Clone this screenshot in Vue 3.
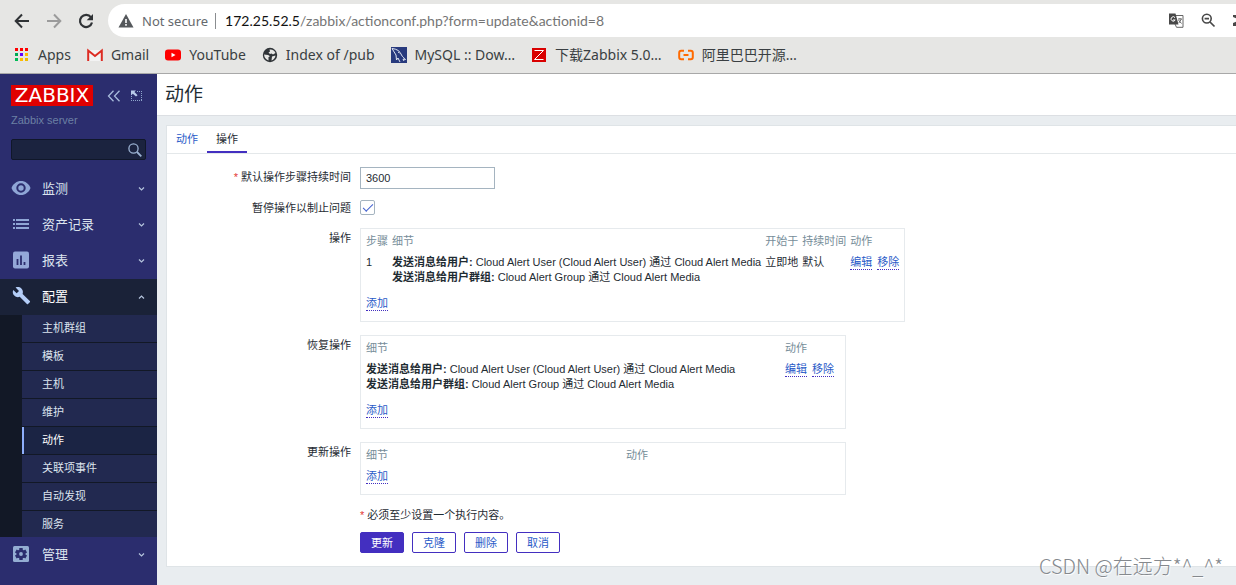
<script setup>
import { ref } from 'vue'

const bookmarks = [
  { id: 'apps', label: 'Apps' },
  { id: 'gmail', label: 'Gmail' },
  { id: 'youtube', label: 'YouTube' },
  { id: 'globe', label: 'Index of /pub' },
  { id: 'mysql', label: 'MySQL :: Dow…' },
  { id: 'zabbix', label: '下载Zabbix 5.0…' },
  { id: 'aliyun', label: '阿里巴巴开源…' },
]

const appColors = ['#f00', '#f00', '#f00', '#0a5', '#60f', '#fb0', '#0b5', '#fb0', '#eb0']

const menu = [
  { id: 'eye', label: '监测' },
  { id: 'list', label: '资产记录' },
  { id: 'chart', label: '报表' },
  {
    id: 'wrench',
    label: '配置',
    open: true,
    children: ['主机群组', '模板', '主机', '维护', '动作', '关联项事件', '自动发现', '服务'],
  },
  { id: 'gear', label: '管理' },
]

const messages = [
  { to: '发送消息给用户:', text: 'Cloud Alert User (Cloud Alert User) 通过 Cloud Alert Media' },
  { to: '发送消息给用户群组:', text: 'Cloud Alert Group 通过 Cloud Alert Media' },
]

const duration = ref('3600')
const pause = ref(true)
const search = ref('')
</script>

<template>
  <div class="window">
    <header class="browser">
      <div class="toolbar">
        <button class="tool" aria-label="Back">
          <svg width="16" height="16" viewBox="0 0 16 16"><path d="M15 8H2M8 1.5 1.7 8 8 14.5" fill="none" stroke="#303336" stroke-width="2" /></svg>
        </button>
        <button class="tool" aria-label="Forward">
          <svg width="16" height="16" viewBox="0 0 16 16"><path d="M1 8h13M8 1.5 14.3 8 8 14.5" fill="none" stroke="#9b9b9b" stroke-width="2" /></svg>
        </button>
        <button class="tool" aria-label="Reload">
          <svg width="16" height="16" viewBox="0 0 16 16"><path d="M13 4.3A6.1 6.1 0 1 0 14 9.5" fill="none" stroke="#303336" stroke-width="2.2" /><path d="M15 1v6.3H8.7z" fill="#303336" /></svg>
        </button>
        <div class="address">
          <svg width="16" height="14" viewBox="0 0 16 14"><path d="M8 0 15.5 13.5H.5z" fill="#55585c" /><path d="M7.2 5h1.6v4H7.2zM7.2 10h1.6v1.7H7.2z" fill="#fff" /></svg>
          <span class="secure">Not secure</span>
          <span class="url"><b>172.25.52.5</b>/zabbix/actionconf.php?form=update&amp;actionid=8</span>
          <div class="page-tools">
            <button class="tool" aria-label="Translate">
              <svg width="15" height="15" viewBox="0 0 15 15">
                <path d="M5 2.5h9v11.8H7.5L6 11" fill="none" stroke="#666" />
                <path d="M0 .5h6.5l3 11H0z" fill="#484848" />
                <path d="M6 4.6A2.2 2.2 0 1 0 6.2 7H4" fill="none" stroke="#fff" />
                <path d="M9 6h4M11 5v1M12.3 6.2 9.8 10M9.5 7l3 3.5" fill="none" stroke="#666" />
              </svg>
            </button>
            <button class="tool" aria-label="Zoom out">
              <svg width="15" height="15" viewBox="0 0 15 15"><circle cx="5.8" cy="5.6" r="4.4" fill="none" stroke="#484848" stroke-width="1.6" /><path d="M3.6 5.6H8M9 9l4.5 4.5" stroke="#484848" stroke-width="1.7" /></svg>
            </button>
            <button class="tool" aria-label="Extension">
              <svg width="15" height="15" viewBox="0 0 15 15"><path d="M0 2h5v4L0 4zM0 13v-3l5-2v5zM8 2h5v11H8z" fill="#484848" /></svg>
            </button>
          </div>
        </div>
      </div>
      <nav class="bookmarks">
        <a v-for="b in bookmarks" :key="b.id" href="#">
          <svg width="16" height="16" viewBox="0 0 16 16">
            <template v-if="b.id === 'apps'">
              <rect v-for="(c, i) in appColors" :key="i" :x="1 + (i % 3) * 5" :y="1 + Math.floor(i / 3) * 5" width="3" height="3" :fill="c" />
            </template>
            <template v-else-if="b.id === 'gmail'">
              <path d="M1 3h14v11H1z" fill="#f3f3f3" />
              <path d="M1.200 14V3.500L8 9l6.800-5.500V14" fill="none" stroke="#dd2c23" stroke-width="2" />
            </template>
            <template v-else-if="b.id === 'youtube'">
              <rect y="2.5" width="16" height="11" rx="3" fill="#f00" />
              <path d="M6.500 5.700v4.600l4-2.300z" fill="#fff" />
            </template>
            <template v-else-if="b.id === 'globe'">
              <circle cx="8" cy="8" r="7.2" fill="#303438" />
              <path d="M2 7.500 6 8q2 .3 1.500 2H6.500v3.500Q2.500 12 2 7.500zM7.500 2.500Q12 2 13.500 6L11 7.500 9.500 6.500 8 7 6.500 5.500 8 4.500zM10 9.500l3.500-1Q13 12 9.500 13.500z" fill="#e6e6e4" />
            </template>
            <template v-else-if="b.id === 'mysql'">
              <rect width="16" height="16" fill="#283a7d" />
              <path d="M1 1.500C6 2 9 4 10.500 8c.8 2 2.500 2.500 4 4.500L12 12l1 2M1 1.500 5 8l.5 5L7 11l2 4M7 5l1.500 1" fill="none" stroke="#dfe5f2" />
            </template>
            <template v-else-if="b.id === 'zabbix'">
              <rect x="1" y="1" width="14" height="14" fill="#d90000" />
              <path d="M3.500 3.500h9l-9 9h9" fill="none" stroke="#fff" />
            </template>
            <template v-else>
              <path d="M6 3.700H3.200Q1.200 3.700 1.200 5.700v4.600q0 2 2 2H6M10 3.700h2.800q2 0 2 2v4.600q0 2-2 2H10M5.500 8h5" fill="none" stroke="#ff6a00" stroke-width="2" />
            </template>
          </svg>
          <span>{{ b.label }}</span>
        </a>
      </nav>
    </header>

    <div class="app">
      <aside class="sidebar">
        <div class="brand">
          <a href="#" class="logo">ZABBIX</a>
          <button aria-label="Collapse menu">
            <svg width="14" height="12" viewBox="0 0 14 12"><path d="M6.500.8 1.500 6l5 5.200M12.500.8l-5 5.200 5 5.200" fill="none" stroke="#a8bbdc" stroke-width="1.300" /></svg>
          </button>
          <button aria-label="Hide menu">
            <svg width="13" height="12" viewBox="0 0 13 12"><path d="M7 1.500h5M11.500 1v10M1.500 6v5M1 10.500h11" fill="none" stroke="#8fa6cc" stroke-dasharray="1 1" /><path d="M1 5.500V.5h5L4.400 2.100 7.600 5.300 6 6.500 2.800 3.700z" fill="#b9cbea" /></svg>
          </button>
        </div>
        <div class="server">Zabbix server</div>
        <form class="search" @submit.prevent>
          <input v-model="search" type="text" aria-label="Search" />
          <button aria-label="Search">
            <svg width="14" height="14" viewBox="0 0 14 14"><circle cx="5.500" cy="5.500" r="4.600" fill="none" stroke="#9bb2d2" stroke-width="1.300" /><path d="m9 9 4.300 4.300" stroke="#9bb2d2" stroke-width="1.800" /></svg>
          </button>
        </form>
        <ul class="menu">
          <li v-for="m in menu" :key="m.id" :class="{ open: m.open }">
            <a href="#" class="item">
              <svg width="20" height="20" viewBox="0 0 20 20">
                <template v-if="m.id === 'eye'">
                  <path d="M10 3C5.800 3 2 5.700.5 10 2 14.300 5.800 17 10 17s8-2.700 9.500-7C18 5.700 14.200 3 10 3z" fill="#8fa6d6" />
                  <circle cx="10" cy="10" r="3.700" fill="#8fa6d6" stroke="#2b2d6e" stroke-width="2" />
                </template>
                <path v-else-if="m.id === 'list'" d="M2 6h2M5 6h13M2 10h2M5 10h13M2 14h2M5 14h13" stroke="#8fa6d6" stroke-width="2" />
                <template v-else-if="m.id === 'chart'">
                  <rect x="2" y="1.500" width="16" height="17" rx="2" fill="#94a8d8" />
                  <path d="M6.500 9v6M10 5.500V15M13.500 12v3" stroke="#2b2d6e" stroke-width="1.800" />
                </template>
                <path v-else-if="m.id === 'wrench'" d="M17.800 15.600 10.600 8.400c.7-1.800.3-3.900-1.200-5.400C7.800 1.500 5.500 1.200 3.600 2L7 5.400 4.700 7.800 1.300 4.400C.3 6.300.8 8.600 2.300 10.100c1.500 1.500 3.600 1.900 5.400 1.200l7.200 7.200c.3.300.8.300 1.100 0l1.800-1.800c.4-.3.400-.8 0-1.100z" transform="translate(1 -.5)" fill="#b4cdf8" />
                <template v-else>
                  <rect x="2" y="2" width="16" height="16" rx="1.500" fill="#94add2" />
                  <g stroke="#2b2d6e" stroke-width="3.400"><path d="M10 4v12M4.800 7l10.400 6M4.800 13l10.400-6" /></g>
                  <circle cx="10" cy="10" r="4.500" fill="#2b2d6e" /><circle cx="10" cy="10" r="1.900" fill="#94add2" />
                </template>
              </svg>
              <span>{{ m.label }}</span>
              <svg class="chevron" width="7" height="6" viewBox="0 0 7 6"><path :d="m.open ? 'M1 5.500 3.500 3 6 5.500' : 'M1 2.500 3.500 5 6 2.500'" fill="none" stroke="#b5c4dd" stroke-width="1.200" /></svg>
            </a>
            <ul v-if="m.children" class="submenu">
              <li v-for="c in m.children" :key="c"><a href="#" :class="{ current: c === '动作' }">{{ c }}</a></li>
            </ul>
          </li>
        </ul>
      </aside>

      <main>
        <h1>动作</h1>
        <section class="panel">
          <nav class="tabs">
            <a href="#">动作</a>
            <a href="#" class="selected">操作</a>
          </nav>
          <form class="form" @submit.prevent>
            <label for="duration"><i>*</i> 默认操作步骤持续时间</label>
            <input id="duration" v-model="duration" class="text" type="text" />

            <label for="pause" class="low">暂停操作以制止问题</label>
            <input id="pause" v-model="pause" class="check" type="checkbox" />

            <span class="label">操作</span>
            <div class="box">
              <table class="steps">
                <thead>
                  <tr><th>步骤</th><th>细节</th><th>开始于</th><th>持续时间</th><th>动作</th></tr>
                </thead>
                <tbody>
                  <tr class="data">
                    <td>1</td>
                    <td><div v-for="m in messages" :key="m.to"><b>{{ m.to }}</b> {{ m.text }}</div></td>
                    <td>立即地</td>
                    <td>默认</td>
                    <td><div class="actions"><button class="link">编辑</button><button class="link">移除</button></div></td>
                  </tr>
                  <tr><td colspan="5"><button class="link">添加</button></td></tr>
                </tbody>
              </table>
            </div>

            <span class="label">恢复操作</span>
            <div class="box">
              <table class="recovery">
                <thead>
                  <tr><th>细节</th><th>动作</th></tr>
                </thead>
                <tbody>
                  <tr class="data">
                    <td><div v-for="m in messages" :key="m.to"><b>{{ m.to }}</b> {{ m.text }}</div></td>
                    <td><div class="actions"><button class="link">编辑</button><button class="link">移除</button></div></td>
                  </tr>
                  <tr><td colspan="2"><button class="link">添加</button></td></tr>
                </tbody>
              </table>
            </div>

            <span class="label">更新操作</span>
            <div class="box">
              <table class="update">
                <thead>
                  <tr><th>细节</th><th>动作</th></tr>
                </thead>
                <tbody>
                  <tr><td colspan="2"><button class="link">添加</button></td></tr>
                </tbody>
              </table>
            </div>

            <p class="note"><i>*</i> 必须至少设置一个执行内容。</p>
            <div class="buttons">
              <button class="btn primary">更新</button>
              <button class="btn">克隆</button>
              <button class="btn">删除</button>
              <button class="btn">取消</button>
            </div>
          </form>
        </section>
      </main>
    </div>
    <div class="watermark">CSDN @在远方*^_^*</div>
  </div>
</template>

<style>
body {
  margin: 0;
  overflow: hidden;
}
</style>

<style scoped>
* {
  box-sizing: border-box;
}
.window {
  position: relative;
  display: flex;
  flex-direction: column;
  min-height: 100vh;
  overflow: hidden;
  color: #1f2c33;
  font: 11px/15px "Liberation Sans", "Noto Sans CJK SC", sans-serif;
}
button,
input {
  margin: 0;
  font: inherit;
  color: inherit;
}
button {
  padding: 0;
  border: 0;
  background: none;
}
a {
  text-decoration: none;
  color: inherit;
}
ul {
  margin: 0;
  padding: 0;
  list-style: none;
}
svg {
  display: block;
  flex: none;
}
i {
  color: #e33734;
  font-style: normal;
}

.browser {
  height: 74px;
  padding-top: 4px;
  border-bottom: 1px solid #a8a8a8;
  background: #e6e6e4;
  color: #3a3f42;
  font: 14px/20px "Noto Sans", "Noto Sans CJK SC", sans-serif;
  white-space: nowrap;
}
.toolbar {
  display: flex;
  align-items: center;
  gap: 16px;
  padding-left: 14px;
}
.address {
  flex: 1;
  display: flex;
  align-items: center;
  height: 33px;
  margin-left: -2px;
  padding-left: 10px;
  border-radius: 17px 0 0 17px;
  background: #fff;
}
.secure {
  margin: 0 9px 0 8px;
  padding-right: 7px;
  border-right: 1px solid #8a8d90;
  color: #65696d;
  font-size: 13px;
  line-height: 16px;
}
.url {
  color: #757575;
  font-family: Lato, sans-serif;
}
.url b {
  color: #111;
  font-weight: 400;
}
.page-tools {
  display: flex;
  gap: 17px;
  margin: 0 -12px 0 auto;
}
.bookmarks {
  display: flex;
  gap: 16px;
  padding: 8px 14px;
}
.bookmarks a {
  display: flex;
  align-items: center;
  gap: 8px;
}

.app {
  flex: 1;
  display: flex;
}
.sidebar {
  flex: none;
  width: 157px;
  background: #2b2d6e;
  color: #dce4ee;
}
.brand {
  display: flex;
  align-items: center;
  gap: 9px;
  padding: 11px 11px 0;
}
.logo {
  width: 82px;
  margin-right: 5px;
  background: #e00000;
  color: #fff;
  font: 20px/21px "DejaVu Sans", sans-serif;
  text-align: center;
}
.server {
  padding: 7px 11px 11px;
  color: #6c80a4;
}
.search {
  display: flex;
  align-items: center;
  height: 21px;
  margin: 0 11px 11px;
  padding-right: 3px;
  border: 1px solid #10172a;
  border-radius: 2px;
  background: #1b233f;
}
.search input {
  flex: 1;
  min-width: 0;
  border: 0;
  background: none;
  outline: 0;
}
.item {
  display: flex;
  align-items: center;
  gap: 11px;
  height: 36px;
  padding: 0 12px 2px 11px;
  font-size: 13px;
}
.chevron {
  margin-left: auto;
}
.open .item {
  background: #1a2238;
  color: #fff;
}
.submenu {
  padding-left: 22px;
  background: #121826;
}
.submenu a {
  display: block;
  height: 27px;
  padding-left: 18px;
  border-left: 2px solid transparent;
  background: #222950 padding-box;
  line-height: 27px;
}
.submenu li {
  background: #222950;
}
.submenu li + li {
  border-top: 1px solid #121826;
}
.submenu li:last-child a {
  height: 26px;
}
.submenu a.current {
  border-color: #8eaefb;
  background: #1b2444;
  color: #fff;
}

main {
  flex: 1;
  min-width: 0;
  padding-bottom: 18px;
  background: #e9edf0;
}
h1 {
  margin: 0 0 9px;
  padding: 0 8px;
  border-bottom: 1px solid #dcdfe3;
  background: #fff;
  font-size: 19px;
  font-weight: 400;
  line-height: 41px;
}
.panel {
  margin-left: 9px;
  border: 1px solid #dfe4e7;
  border-right: 0;
  background: #fff;
}
.tabs {
  display: flex;
  border-bottom: 1px solid #e4e8ea;
}
.tabs a {
  height: 27px;
  padding: 0 9px;
  color: #2a5bc8;
  line-height: 26px;
}
.tabs .selected {
  border-bottom: 2px solid #432fc0;
  color: #1f2c33;
}
.form {
  display: grid;
  grid-template-columns: 184px auto;
  justify-content: start;
  justify-items: start;
  gap: 10px 9px;
  padding: 13px 0;
}
label,
.label {
  justify-self: end;
  line-height: 20px;
}
.low {
  line-height: 19px;
}
.text {
  width: 135px;
  height: 22px;
  padding: 0 5px;
  border: 1px solid #a5b4c0;
  background: #fff;
}
.check {
  appearance: none;
  width: 15px;
  height: 15px;
  margin-top: 1px;
  border: 1px solid #a5b4c0;
  border-radius: 2px;
  background: #fff;
  display: grid;
  place-items: center;
}
.check:checked::before {
  content: "";
  width: 9px;
  height: 4px;
  margin-bottom: 2px;
  border: solid #4563d0;
  border-width: 0 0 1px 1px;
  transform: rotate(-45deg);
}
.box {
  min-width: 486px;
  margin-bottom: 3px;
  padding: 2px 5px 7px;
  border: 1px solid #e6eaed;
}
table {
  border-collapse: collapse;
}
th,
td {
  padding: 3px 4px 3px 0;
  text-align: left;
  vertical-align: top;
  white-space: nowrap;
}
th:last-child,
td:last-child {
  padding-right: 0;
}
th {
  color: #768d99;
  font-weight: 400;
}
.data td {
  padding-bottom: 8px;
}
.recovery th:first-child {
  width: 419px;
}
.update th:first-child {
  width: 260px;
}
.actions {
  display: flex;
  gap: 5px;
}
.link {
  display: block;
  border-bottom: 1px dotted #432fc0;
  color: #2a5bc8;
  line-height: 14px;
}
.note,
.buttons {
  grid-column: 2;
  margin: 0;
}
.note {
  line-height: 14px;
}
.buttons {
  display: flex;
  gap: 8px;
}
.btn {
  height: 21px;
  padding: 2px 10px 0;
  border: 1px solid #432fc0;
  border-radius: 2px;
  color: #2a5bc8;
}
.primary {
  background: #432fc0;
  color: #fff;
}
.watermark {
  position: absolute;
  right: 13px;
  bottom: 6px;
  color: #85898e;
  font: 300 20px/26px "Noto Sans CJK SC", sans-serif;
  text-shadow: 1px 1px 1px #fff;
}
</style>
